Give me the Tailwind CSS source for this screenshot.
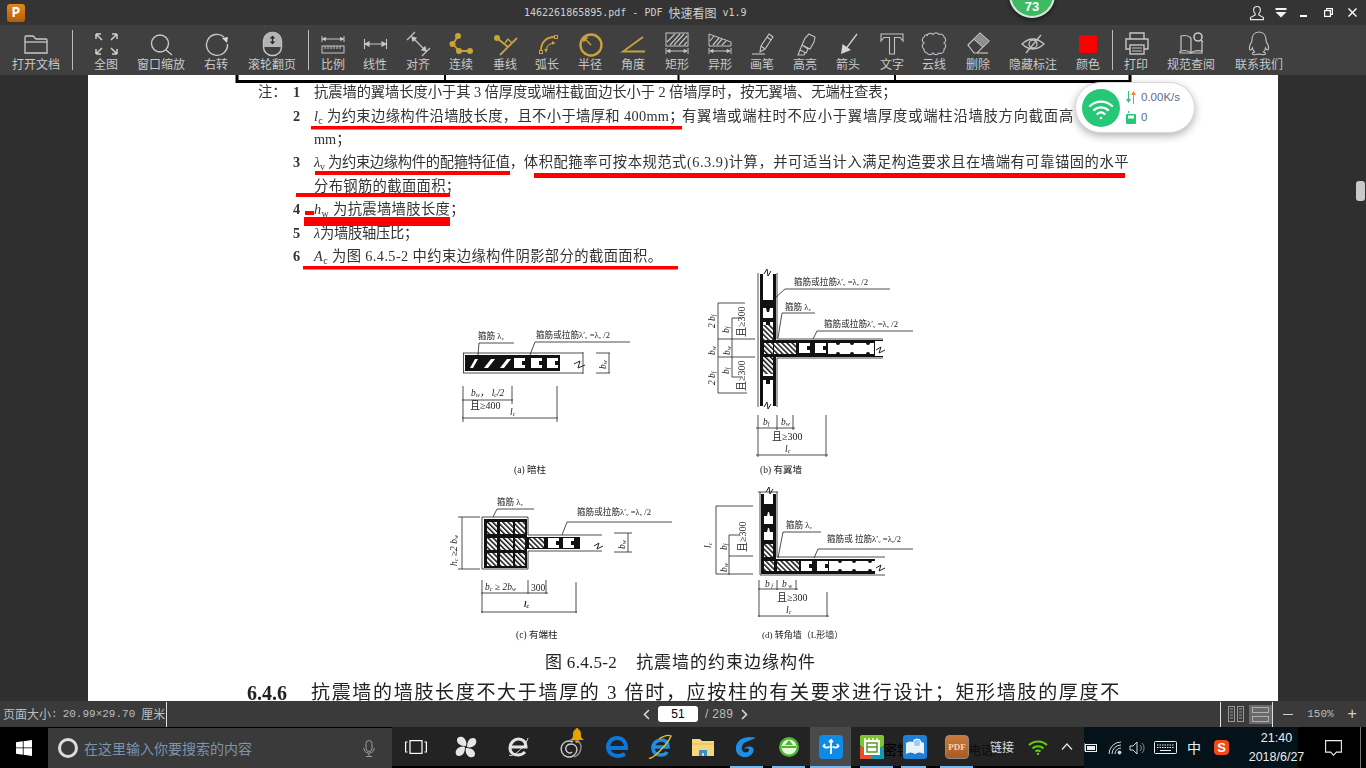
<!DOCTYPE html>
<html lang="zh">
<head>
<meta charset="UTF-8">
<title>PDF 快速看图</title>
<script src="https://cdn.jsdelivr.net/npm/@tailwindcss/browser@4"></script>
</head>
<body class="bg-black">
<div class="relative w-[1366px] h-[768px] overflow-hidden flex flex-col font-['Noto_Sans_CJK_SC','Liberation_Sans',sans-serif]">

  <!-- title bar -->
  <header class="h-[25px] shrink-0 bg-[#343434] flex items-center text-[#d0d0d0]">
    <div class="ml-[7px] w-[18px] h-[18px] rounded-[3px] bg-gradient-to-b from-[#e08a20] to-[#b85c08] flex items-center justify-center text-white text-[14px] leading-none font-bold font-['Liberation_Mono',monospace]">P</div>
    <div class="ml-[499px] flex items-center whitespace-nowrap font-['DejaVu_Sans_Mono',monospace] text-[10px] leading-none">1462261865895.pdf - PDF&nbsp;<span class="text-[12px] font-['Noto_Sans_CJK_SC',sans-serif]">快速看图</span>&nbsp;v1.9</div>
    <div class="ml-auto flex items-center">
      <svg class="w-[16px] h-[16px] mr-[10px]" viewBox="0 0 16 16" fill="none" stroke="#e8e8e8" stroke-width="1.1"><path d="M8 1.5c-2.4 0-3.4 1.8-3.4 3.6 0 1.6.7 2.9 1.6 3.6v1.2L1.5 12.6v2h13v-2l-4.700-2.700V8.700c.9-.7 1.600-2 1.600-3.600 0-1.800-1-3.600-3.400-3.600z"/></svg>
      <svg class="w-[12px] h-[10px] mr-[13px]" viewBox="0 0 12 10" fill="#f2f2f2"><rect width="11" height="2" x=".5"/><path d="M.5 4h11L6 9.500z"/></svg>
      <div class="w-[7px] h-[2px] bg-white mt-[7px] mr-[17px]"></div>
      <svg class="w-[9px] h-[9px] mr-[15px]" viewBox="0 0 9 9" fill="none" stroke="#fff" stroke-width="1.200"><rect x=".6" y="2.600" width="5.800" height="5.800"/><path d="M2.600 2.600V.6h5.800v5.800H6.400"/></svg>
      <svg class="w-[9px] h-[9px] mr-[9px]" viewBox="0 0 9 9" stroke="#fff" stroke-width="1.400"><path d="M.5.5l8 8M8.500.5l-8 8"/></svg>
    </div>
  </header>

  <!-- toolbar -->
  <nav class="h-[50px] shrink-0 bg-[#404040] flex text-[12px] leading-[14px] text-[#c8c8c8] whitespace-nowrap">
    <div class="w-[72px] flex flex-col items-center pt-[5px]">
      <svg class="w-[36px] h-[27px]" viewBox="0 0 36 27" fill="none" stroke="#c9c9c9" stroke-width="1.300"><path d="M7 23V7a1 1 0 0 1 1-1h7l3 3h10a1 1 0 0 1 1 1v13z"/><path d="M7 12h22"/></svg>
      <span>打开文档</span>
    </div>
    <div class="w-px h-[40px] mt-[5px] bg-[#bdbdbd]"></div>
    <div class="w-[66px] flex flex-col items-center pt-[5px]">
      <svg class="w-[36px] h-[27px]" viewBox="0 0 36 27" fill="none" stroke="#cfcfcf" stroke-width="1.500"><path d="M8 4l6 6M8 4h5M8 4v5M29 4l-6 6M29 4h-5M29 4v5M8 24l6-6M8 24h5M8 24v-5M29 24l-6-6M29 24h-5M29 24v-5"/></svg>
      <span>全图</span>
    </div>
    <div class="w-[44px] flex flex-col items-center pt-[5px]">
      <svg class="w-[36px] h-[27px]" viewBox="0 0 36 27" fill="none" stroke="#c9c9c9" stroke-width="1.400"><circle cx="17" cy="13.500" r="8.500"/><path d="M23 20l6 5"/></svg>
      <span>窗口缩放</span>
    </div>
    <div class="w-[66px] flex flex-col items-center pt-[5px]">
      <svg class="w-[36px] h-[27px]" viewBox="0 0 36 27" fill="none" stroke="#c9c9c9" stroke-width="1.400"><path d="M26 7A10.500 10.500 0 1 0 29.500 14"/><path d="M24 8l6-1-1 6z" fill="#d8d8d8" stroke="none"/></svg>
      <span>右转</span>
    </div>
    <div class="w-[46px] flex flex-col items-center pt-[5px]">
      <svg class="w-[36px] h-[27px]" viewBox="0 0 36 27" fill="none" stroke="#c9c9c9" stroke-width="1.400"><rect x="9.500" y="2.500" width="18" height="23" rx="8.500"/><path d="M9.500 11a8.500 8.500 0 0 1 18 0v6h-18z" fill="#b4b4b4" stroke="none"/><path d="M18.500 6.500v7M16.500 8.500l2-2 2 2M16.500 11.500l2 2 2-2" stroke="#222" stroke-width="1.200"/></svg>
      <span>滚轮翻页</span>
    </div>
    <div class="w-[13px]"></div>
    <div class="w-px h-[40px] mt-[5px] bg-[#bdbdbd]"></div>
    <div class="w-[48px] flex flex-col items-center pt-[5px]">
      <svg class="w-[36px] h-[27px]" viewBox="0 0 36 27" fill="none" stroke="#c6c6c6" stroke-width="1"><path d="M7 6v6M29 6v6M7.500 9h21"/><path d="M7.500 9l3-1.500v3zM28.500 9l-3-1.500v3z" fill="#c6c6c6"/><rect x="7" y="16" width="22" height="7"/><path d="M10 16v3M13 16v3M16 16v3M19 16v3M22 16v3M25 16v3"/></svg>
      <span>比例</span>
    </div>
    <div class="w-[36px] flex flex-col items-center pt-[5px]">
      <svg class="w-[36px] h-[27px]" viewBox="0 0 36 27" fill="none" stroke="#c6c6c6" stroke-width="1.100"><path d="M7.500 9v10M29.500 9v10M8 14h21"/><path d="M8 14l4-2v4zM29 14l-4-2v4z" fill="#c6c6c6"/></svg>
      <span>线性</span>
    </div>
    <div class="w-[50px] flex flex-col items-center pt-[5px]">
      <svg class="w-[36px] h-[27px]" viewBox="0 0 36 27" fill="none" stroke="#c6c6c6" stroke-width="1.200"><path d="M7 10l8-8M22 26l8-8M12 7l14 14"/><path d="M12 7l4 1-3 3zM26 21l-4-1 3-3z" fill="#c6c6c6"/></svg>
      <span>对齐</span>
    </div>
    <div class="w-[36px] flex flex-col items-center pt-[5px]">
      <svg class="w-[36px] h-[27px]" viewBox="0 0 36 27" fill="none" stroke="#c9a23a" stroke-width="1.800"><path d="M15 6l-5 8 6 7 11 0"/><g fill="#c9a23a" stroke="none"><circle cx="15" cy="6" r="3"/><circle cx="9.500" cy="14" r="3"/><circle cx="16" cy="21" r="3"/><circle cx="27" cy="21" r="3"/></g></svg>
      <span>连续</span>
    </div>
    <div class="w-[52px] flex flex-col items-center pt-[5px]">
      <svg class="w-[36px] h-[27px]" viewBox="0 0 36 27" fill="none" stroke="#c9a23a" stroke-width="1.800"><path d="M10 8l11 9M30 8L13 25"/><path d="M25 13l-4-4-3 4" stroke-width="1.300"/><circle cx="10" cy="8" r="3" fill="#c9a23a" stroke="none"/></svg>
      <span>垂线</span>
    </div>
    <div class="w-[32px] flex flex-col items-center pt-[5px]">
      <svg class="w-[36px] h-[27px]" viewBox="0 0 36 27" fill="none" stroke="#c9a23a" stroke-width="1.800"><path d="M12 20C12 12 18 7 25 7"/><path d="M17 22C17 16 21 13 26 13" stroke-width="1.200"/><path d="M26 13l-3-2v4zM17 22l-2-3h4z" fill="#c9a23a" stroke="none"/><rect x="10.500" y="20.500" width="3" height="3" stroke-width="1"/><rect x="25.500" y="5.500" width="3" height="3" stroke-width="1"/></svg>
      <span>弧长</span>
    </div>
    <div class="w-[54px] flex flex-col items-center pt-[5px]">
      <svg class="w-[36px] h-[27px]" viewBox="0 0 36 27" fill="none" stroke="#c9a23a" stroke-width="2.400"><circle cx="19" cy="15" r="10.500"/><path d="M19 15l-7-7" stroke-width="1.400"/><path d="M10.500 6.500l6 1-5 5z" fill="#c9a23a" stroke="none"/></svg>
      <span>半径</span>
    </div>
    <div class="w-[32px] flex flex-col items-center pt-[5px]">
      <svg class="w-[36px] h-[27px]" viewBox="0 0 36 27" fill="none" stroke="#c9a23a" stroke-width="1.800"><path d="M28 7L8 21.500h22"/></svg>
      <span>角度</span>
    </div>
    <div class="w-[56px] flex flex-col items-center pt-[5px]">
      <svg class="w-[36px] h-[27px]" viewBox="0 0 36 27" fill="none" stroke="#c4c4c4" stroke-width="1"><rect x="7" y="3" width="22" height="13"/><path d="M8 12l8-8M11 15l10-11M15 15l10-11M20 15l8-9M25 15l3-3" stroke-width="1.200"/><path d="M7 18v6M29 18v6M8 21h20"/><path d="M8 21l3-1.500v3zM28 21l-3-1.500v3z" fill="#c4c4c4"/></svg>
      <span>矩形</span>
    </div>
    <div class="w-[30px] flex flex-col items-center pt-[5px]">
      <svg class="w-[36px] h-[27px]" viewBox="0 0 36 27" fill="none" stroke="#c4c4c4" stroke-width="1"><path d="M7 4v12h22v-4z"/><path d="M8 11l4-5M11 15l6-7M15 15l5-6M20 15l4-4" stroke-width="1.200"/><path d="M7 18v6M29 18v6M8 21h20"/><path d="M8 21l3-1.500v3zM28 21l-3-1.500v3z" fill="#c4c4c4"/></svg>
      <span>异形</span>
    </div>
    <div class="w-[54px] flex flex-col items-center pt-[5px]">
      <svg class="w-[36px] h-[27px]" viewBox="0 0 36 27" fill="none" stroke="#c4c4c4" stroke-width="1.100"><path d="M16 22l1-6 8-12 4 3-8 12zM23 7l4 3M17 16l4 3"/><path d="M8 24h13"/></svg>
      <span>画笔</span>
    </div>
    <div class="w-[32px] flex flex-col items-center pt-[5px]">
      <svg class="w-[36px] h-[27px]" viewBox="0 0 36 27" fill="none" stroke="#c4c4c4" stroke-width="1.100"><path d="M22 4l6 3-1 5-4 7-8-4 3-7zM15 15l-2 5 6 3 2-4zM13 20l-2 5h6l1-2"/></svg>
      <span>高亮</span>
    </div>
    <div class="w-[54px] flex flex-col items-center pt-[5px]">
      <svg class="w-[36px] h-[27px]" viewBox="0 0 36 27" fill="none" stroke="#d4d4d4" stroke-width="1.300"><path d="M27 4L15 20"/><path d="M11 24l1.500-10 8.500 6z" fill="#d4d4d4" stroke="none"/></svg>
      <span>箭头</span>
    </div>
    <div class="w-[34px] flex flex-col items-center pt-[5px]">
      <svg class="w-[36px] h-[27px]" viewBox="0 0 36 27" fill="none" stroke="#c4c4c4" stroke-width="1.100"><path d="M7 4h22v7l-3-3.500h-5.500V24h-5V7.500H10L7 11z"/></svg>
      <span>文字</span>
    </div>
    <div class="w-[50px] flex flex-col items-center pt-[5px]">
      <svg class="w-[36px] h-[27px]" viewBox="0 0 36 27" fill="none" stroke="#b8b8b8" stroke-width="1.200"><path d="M11 6a3.500 3.500 0 0 1 6-1.500 3.500 3.500 0 0 1 6 0 3.500 3.500 0 0 1 5 2.500 3.500 3.500 0 0 1 0 6 3.500 3.500 0 0 1 0 6 3.500 3.500 0 0 1-5 4 3.500 3.500 0 0 1-6 0 3.500 3.500 0 0 1-6 0 3.500 3.500 0 0 1-3-4 3.500 3.500 0 0 1 0-6 3.500 3.500 0 0 1 0-6 3.500 3.500 0 0 1 3-2.500z"/></svg>
      <span>云线</span>
    </div>
    <div class="w-[38px] flex flex-col items-center pt-[5px]">
      <svg class="w-[36px] h-[27px]" viewBox="0 0 36 27" fill="none" stroke="#c4c4c4" stroke-width="1.200"><path d="M8 15L20 3l9 8-12 12h-3z"/><path d="M14 9l9 8"/><path d="M15 9l5-5 8 7-5 5z" fill="#8f8f8f" stroke="none"/><path d="M17 23h11"/></svg>
      <span>删除</span>
    </div>
    <div class="w-[72px] flex flex-col items-center pt-[5px]">
      <svg class="w-[36px] h-[27px]" viewBox="0 0 36 27" fill="none" stroke="#c4c4c4" stroke-width="1.300"><path d="M7 14Q18 4 29 14 18 24 7 14z"/><circle cx="18" cy="14" r="4"/><path d="M11 23L26 5"/></svg>
      <span>隐藏标注</span>
    </div>
    <div class="w-[38px] flex flex-col items-center pt-[5px]">
      <svg class="w-[36px] h-[27px]" viewBox="0 0 36 27"><rect x="9" y="5" width="18" height="18" rx="2" fill="#ff0000"/></svg>
      <span>颜色</span>
    </div>
    <div class="w-[5px]"></div>
    <div class="w-px h-[40px] mt-[5px] bg-[#bdbdbd]"></div>
    <div class="w-[46px] flex flex-col items-center pt-[5px]">
      <svg class="w-[36px] h-[27px]" viewBox="0 0 36 27" fill="none" stroke="#c6c6c6" stroke-width="1.400"><path d="M12 9V3h14v6M12 19H8V9h22v10h-4"/><rect x="12" y="15" width="14" height="9"/><path d="M14 18h10M14 21h10" stroke-width="1"/></svg>
      <span>打印</span>
    </div>
    <div class="w-[64px] flex flex-col items-center pt-[5px]">
      <svg class="w-[36px] h-[27px]" viewBox="0 0 36 27" fill="none" stroke="#c6c6c6" stroke-width="1.200"><path d="M18 8c-2-2-6-3-10-2v15c4-1 8 0 10 2 2-2 6-3 11-2V11M18 8v15"/><path d="M7 21v2h22v-2"/><circle cx="25" cy="7" r="4" stroke-width="1.600"/><path d="M28 10l2 2"/></svg>
      <span>规范查阅</span>
    </div>
    <div class="w-[72px] flex flex-col items-center pt-[5px]">
      <svg class="w-[36px] h-[27px]" viewBox="0 0 36 27" fill="none" stroke="#c6c6c6" stroke-width="1.100"><path d="M18 2c-5 0-7 4-7 8 0 2-1 3-2 5-1 3-.5 5 .5 5 .6 0 1.500-1 2-2 .2 1.500 1 3 2 4-1.500.5-2.500 1.200-2 2 .5 1 4 .7 6.500 0 2.500.7 6 1 6.500 0 .5-.8-.5-1.500-2-2 1-1 1.800-2.500 2-4 .5 1 1.400 2 2 2 1 0 1.500-2 .5-5-1-2-2-3-2-5 0-4-2-8-7-8z"/></svg>
      <span>联系我们</span>
    </div>
  </nav>

  <!-- document area -->
  <main class="relative h-[626px] shrink-0 flex bg-[#2f2f2f]">
    <div class="w-[88px] shrink-0"></div>
    <section class="relative w-[1190px] shrink-0 bg-white overflow-hidden">
      <div class="blur-[0.3px] pl-[170px] pt-[5px] text-[#333] text-[14.300px] whitespace-nowrap font-['Liberation_Serif','Noto_Sans_CJK_SC',serif]">
        <div class="h-[24px] leading-[24px] flex"><span class="w-[35px]">注：</span><b class="w-[21px]">1</b><span class="tracking-[-0.08px]">抗震墙的翼墙长度小于其 3 倍厚度或端柱截面边长小于 2 倍墙厚时，按无翼墙、无端柱查表；</span></div>
        <div class="h-[24px] leading-[24px] flex"><span class="w-[35px]"></span><b class="w-[21px]">2</b><span class="tracking-[0.35px]"><i>l</i><sub class="text-[10px]">c</sub> 为约束边缘构件沿墙肢长度，且不小于墙厚和 400mm；</span><span class="ml-[-2px] tracking-[0.78px]">有翼墙或端柱时不应小于翼墙厚度或端柱沿墙肢方向截面高</span></div>
        <div class="h-[23px] leading-[23px] flex"><span class="w-[56px]"></span><span>mm；</span></div>
        <div class="h-[23px] leading-[23px] flex"><span class="w-[35px]"></span><b class="w-[21px]">3</b><span class="tracking-[-0.3px]"><i>λ</i><sub class="text-[10px]">v</sub> 为约束边缘构件的配箍特征值，</span><span class="tracking-[0.53px]">体积配箍率可按本规范式(6.3.9)计算，并可适当计入满足构造要求且在墙端有可靠锚固的水平</span></div>
        <div class="h-[24px] leading-[24px] flex"><span class="w-[56px]"></span><span class="tracking-[0.35px]">分布钢筋的截面面积；</span></div>
        <div class="h-[23px] leading-[23px] flex"><span class="w-[35px]"></span><b class="w-[21px]">4</b><span class="tracking-[0.35px]"><i>h</i><sub class="text-[10px]">w</sub> 为抗震墙墙肢长度；</span></div>
        <div class="h-[24px] leading-[24px] flex"><span class="w-[35px]"></span><b class="w-[21px]">5</b><span class="tracking-[-0.3px]"><i>λ</i>为墙肢轴压比；</span></div>
        <div class="h-[23px] leading-[23px] flex"><span class="w-[35px]"></span><b class="w-[21px]">6</b><span class="tracking-[0.4px]"><i>A</i><sub class="text-[10px]">c</sub> 为图 6.4.5-2 中约束边缘构件阴影部分的截面面积。</span></div>

        <!-- caption and the cut-off clause: placed under the drawing block -->
        <div class="h-[383px]"></div>
        <div class="h-[24px] leading-[24px] pl-[287px] text-[17px] text-[#222] tracking-[0.3px]">图 6.4.5-2<span class="ml-[19px] tracking-[1px]">抗震墙的约束边缘构件</span></div>
        <div class="mt-[4px] h-[28px] leading-[28px] -ml-[11px] flex items-center text-[#222]"><b class="text-[20px] w-[64px]">6.4.6</b><span class="text-[19px] tracking-[1.680px]">抗震墙的墙肢长度不大于墙厚的 3 倍时，应按柱的有关要求进行设计；矩形墙肢的厚度不</span></div>
      </div>

      <!-- four detail drawings, screen coordinates -->
      <svg class="absolute left-0 top-0 blur-[0.3px]" width="1190" height="626" viewBox="88 75 1190 626" font-size="8.600" fill="#222" font-family="Liberation Serif, Noto Sans CJK SC, serif">
        <defs>
          <pattern id="h" width="3.600" height="3.600" patternUnits="userSpaceOnUse" patternTransform="rotate(-45)"><rect width="3.600" height="3.600" fill="#fff"/><rect width="1.500" height="3.600" fill="#111"/></pattern>
          <g id="cell"><rect width="11" height="10" fill="#fff"/><rect x="8" y="3" width="3.500" height="4" fill="#111"/></g>
        </defs>

        <!-- (a) -->
        <g fill="none" stroke="#222" stroke-width=".8">
          <path d="M478 355L479 343H514M530 355L535 342H630"/>
          <path d="M463 353H583M463 373H583M463.500 353V373M583 352V374"/>
          <path d="M463 386V422M512 386V404M557 386V422M462 400H513M462 418H558"/>
          <path d="M596 353H610M596 373H610M609 353V373"/>
        </g>
        <rect x="465" y="355" width="95" height="16" fill="#111"/>
        <path d="M470 368l5-9h3l-5 9zM484 368l7-9h4l-7 9zM500 368l7-9h4l-7 9z" fill="#fff"/>
        <use href="#cell" x="514" y="358"/><use href="#cell" x="531" y="358"/><use href="#cell" x="547" y="358"/>
        <rect x="560" y="356" width="22" height="14" fill="#fff"/>
        <path d="M574 364l6-3-2 7 7-3" fill="none" stroke="#222"/>
        <g><text x="478" y="339">箍筋 λ<tspan font-size="5" dy="1">v</tspan></text>
        <text x="536" y="338">箍筋或拉筋λ′<tspan font-size="5" dy="1">v</tspan><tspan dy="-1"> =λ</tspan><tspan font-size="5" dy="1">v</tspan><tspan dy="-1"> /2</tspan></text>
        <text x="471" y="396" font-size="9.500" font-style="italic">b<tspan font-size="6" dy="1">w</tspan><tspan dy="-1">， l</tspan><tspan font-size="6" dy="1">c</tspan><tspan dy="-1">/2</tspan></text>
        <text x="470" y="409" font-size="10">且≥400</text>
        <text x="510" y="415" font-size="9.500" font-style="italic">l<tspan font-size="6" dy="1">c</tspan></text>
        <text transform="translate(606 369) rotate(-90)" font-size="9.500" font-style="italic">b<tspan font-size="6" dy="1">w</tspan></text>
        <text x="514" y="473" font-size="9.500">(a) 暗柱</text></g>

        <!-- (b) -->
        <g fill="none" stroke="#222" stroke-width=".8">
          <path d="M758 273V407M777 273V339M777 358V407M777 339H883M777 358H883"/>
          <path d="M775 298L785 289H890M778 338L782 313H815M813 339L817 331H913"/>
          <path d="M718 303V393M732 318V377M718 303H745M718 339H755M718 357H755M718 393H747M732 318H741M732 377H741"/>
          <path d="M758 415V457M777 415V430M793 415V430M826 415V457M756 428H795M756 455H828"/>
          <path d="M764 274l3-5 1 7 3-5M764 407l3-5 1 7 3-5" stroke-width="1"/>
        </g>
        <rect x="760" y="274" width="3" height="132" fill="#111"/><rect x="773" y="274" width="3" height="132" fill="#111"/>
        <path d="M763 300h10v8h-3l-1 4h-2l-1-4h-3zM763 318h10v4h-3v4h-4v-4h-3zM763 376h10v4h-3v4h-4v-4h-3z" fill="#111"/>
        <rect x="763" y="325" width="10" height="16" fill="url(#h)"/><rect x="763" y="357" width="10" height="17" fill="url(#h)"/>
        <rect x="760" y="340" width="123" height="17" fill="#111"/>
        <rect x="764" y="343" width="9" height="11" fill="url(#h)"/><rect x="774" y="343" width="22" height="11" fill="url(#h)"/>
        <use href="#cell" x="799" y="343"/><use href="#cell" x="815" y="343"/>
        <rect x="828" y="343" width="46" height="11" fill="#fff"/>
        <circle cx="838" cy="343" r="2" fill="#111"/><circle cx="838" cy="354" r="2" fill="#111"/><circle cx="852" cy="343" r="2" fill="#111"/><circle cx="852" cy="354" r="2" fill="#111"/><circle cx="868" cy="343" r="2" fill="#111"/><circle cx="868" cy="354" r="2" fill="#111"/>
        <rect x="875" y="341" width="9" height="15" fill="#fff"/>
        <path d="M876 350l5-3-2 6 6-3" fill="none" stroke="#222"/>
        <g><text x="794" y="285">箍筋或拉筋λ′<tspan font-size="5" dy="1">v</tspan><tspan dy="-1"> =λ</tspan><tspan font-size="5" dy="1">v</tspan><tspan dy="-1"> /2</tspan></text>
        <text x="785" y="310">箍筋 λ<tspan font-size="5" dy="1">v</tspan></text>
        <text x="824" y="327">箍筋或拉筋λ′<tspan font-size="5" dy="1">v</tspan><tspan dy="-1"> =λ</tspan><tspan font-size="5" dy="1">v</tspan><tspan dy="-1"> /2</tspan></text>
        <text transform="translate(715 328) rotate(-90)" font-size="9.500" font-style="italic">2 b<tspan font-size="6" dy="1">f</tspan></text>
        <text transform="translate(729 333) rotate(-90)" font-size="9.500" font-style="italic">b<tspan font-size="6" dy="1">f</tspan></text>
        <text transform="translate(745 337) rotate(-90)" font-size="10">且≥300</text>
        <text transform="translate(715 355) rotate(-90)" font-size="9.500" font-style="italic">b<tspan font-size="6" dy="1">w</tspan></text>
        <text transform="translate(730 355) rotate(-90)" font-size="9.500" font-style="italic">b<tspan font-size="6" dy="1">w</tspan></text>
        <text transform="translate(715 385) rotate(-90)" font-size="9.500" font-style="italic">2 b<tspan font-size="6" dy="1">f</tspan></text>
        <text transform="translate(729 374) rotate(-90)" font-size="9.500" font-style="italic">b<tspan font-size="6" dy="1">f</tspan></text>
        <text transform="translate(745 391) rotate(-90)" font-size="10">且≥300</text>
        <text x="763" y="425" font-size="9.500" font-style="italic">b<tspan font-size="6" dy="1">f</tspan></text>
        <text x="781" y="425" font-size="9.500" font-style="italic">b<tspan font-size="6" dy="1">w</tspan></text>
        <text x="772" y="440" font-size="10">且≥300</text>
        <text x="785" y="452" font-size="9.500" font-style="italic">l<tspan font-size="6" dy="1">c</tspan></text>
        <text x="760" y="473" font-size="9.500">(b) 有翼墙</text></g>

        <!-- (c) -->
        <g fill="none" stroke="#222" stroke-width=".8">
          <path d="M493 517L497 509H534M562 535L567 522H672"/>
          <path d="M482 517H528V535H602M528 569V551H602M482 517V569H528"/>
          <path d="M458 517H480M458 569H480M462 517V569"/>
          <path d="M614 533H632M614 552H632M628 533V552"/>
          <path d="M482 580V613M528 580V594M546 580V594M576 582V613M481 593H548M481 612H577"/>
        </g>
        <rect x="484" y="519" width="43" height="49" fill="#111"/>
        <g fill="url(#h)"><rect x="487" y="522" width="10" height="12"/><rect x="500" y="522" width="13" height="12"/><rect x="515" y="522" width="10" height="12"/><rect x="487" y="538" width="10" height="12"/><rect x="500" y="538" width="13" height="12"/><rect x="515" y="538" width="10" height="12"/><rect x="487" y="553" width="10" height="13"/><rect x="500" y="553" width="13" height="13"/><rect x="515" y="553" width="10" height="13"/></g>
        <rect x="527" y="537" width="56" height="12" fill="#111"/>
        <rect x="529" y="538" width="15" height="10" fill="url(#h)"/>
        <use href="#cell" x="548" y="538"/><use href="#cell" x="563" y="538"/>
        <rect x="580" y="537" width="22" height="12" fill="#fff"/>
        <path d="M594 546l5-3-2 6 6-3" fill="none" stroke="#222"/>
        <g><text x="497" y="505">箍筋 λ<tspan font-size="5" dy="1">v</tspan></text>
        <text x="577" y="515">箍筋或拉筋λ′<tspan font-size="5" dy="1">v</tspan><tspan dy="-1"> =λ</tspan><tspan font-size="5" dy="1">v</tspan><tspan dy="-1"> /2</tspan></text>
        <text transform="translate(457 566) rotate(-90)" font-size="9.500" font-style="italic">h<tspan font-size="6" dy="1">c</tspan><tspan dy="-1"> ≥2 b</tspan><tspan font-size="6" dy="1">w</tspan></text>
        <text transform="translate(625 549) rotate(-90)" font-size="9.500" font-style="italic">b<tspan font-size="6" dy="1">w</tspan></text>
        <text x="485" y="590" font-size="9.500" font-style="italic">b<tspan font-size="6" dy="1">c</tspan><tspan dy="-1"> ≥ 2b</tspan><tspan font-size="6" dy="1">w</tspan></text>
        <text x="531" y="591" font-size="9.500">300</text>
        <text x="524" y="607" font-weight="bold" font-style="italic">l<tspan font-size="6" dy="1">c</tspan></text>
        <text x="516" y="638" font-size="9.500">(c) 有端柱</text></g>

        <!-- (d) -->
        <g fill="none" stroke="#222" stroke-width=".8">
          <path d="M758 492H778M760 492V575H885M777 492V557H885"/>
          <path d="M778 558L783 532H821M814 558L818 549H913"/>
          <path d="M716 506V574M729 535V575M716 506H753M716 574H753M729 535H739M729 556H753"/>
          <path d="M759 580V617M777 580V590M796 580V590M827 592V617M758 589H798M758 616H829"/>
          <path d="M766 492l3-5 1 7 3-5" stroke-width="1"/>
        </g>
        <rect x="761" y="494" width="15" height="80" fill="#111"/>
        <rect x="764" y="494" width="9" height="10" fill="#fff"/>
        <path d="M764 516h3l1-4h1l1 4h3v8h-9zM764 532h3l1-4h1l1 4h3v8h-9z" fill="#fff"/>
        <rect x="764" y="544" width="9" height="13" fill="url(#h)"/>
        <rect x="776" y="559" width="105" height="15" fill="#111"/>
        <rect x="764" y="561" width="10" height="10" fill="url(#h)"/><rect x="777" y="561" width="22" height="10" fill="url(#h)"/>
        <use href="#cell" x="801" y="561"/><use href="#cell" x="817" y="561"/>
        <rect x="829" y="561" width="46" height="10" fill="#fff"/>
        <circle cx="840" cy="561" r="2" fill="#111"/><circle cx="840" cy="571" r="2" fill="#111"/><circle cx="854" cy="561" r="2" fill="#111"/><circle cx="854" cy="571" r="2" fill="#111"/><circle cx="870" cy="561" r="2" fill="#111"/><circle cx="870" cy="571" r="2" fill="#111"/>
        <rect x="875" y="558" width="9" height="16" fill="#fff"/>
        <path d="M876 568l5-3-2 6 6-3" fill="none" stroke="#222"/>
        <g><text x="786" y="528">箍筋 λ<tspan font-size="5" dy="1">v</tspan></text>
        <text x="827" y="542">箍筋或 拉筋λ′<tspan font-size="5" dy="1">v</tspan><tspan dy="-1"> =λ</tspan><tspan font-size="5" dy="1">v</tspan><tspan dy="-1">/2</tspan></text>
        <text transform="translate(711 548) rotate(-90)" font-size="9.500" font-style="italic">l<tspan font-size="6" dy="1">c</tspan></text>
        <text transform="translate(727 550) rotate(-90)" font-size="9.500" font-style="italic">b<tspan font-size="6" dy="1">f</tspan></text>
        <text transform="translate(727 572) rotate(-90)" font-size="9.500" font-style="italic">b<tspan font-size="6" dy="1">w</tspan></text>
        <text transform="translate(746 552) rotate(-90)" font-size="10">且≥300</text>
        <text x="765" y="587" font-size="9.500" font-style="italic">b<tspan font-size="6" dy="1"> f</tspan></text>
        <text x="782" y="587" font-size="9.500" font-style="italic">b<tspan font-size="6" dy="1"> w</tspan></text>
        <text x="777" y="601" font-size="10">且≥300</text>
        <text x="786" y="613" font-size="9.500" font-style="italic">l<tspan font-size="6" dy="1">c</tspan></text>
        <text x="762" y="638" font-size="9">(d) 转角墙（L形墙）</text></g>
      </svg>

      <!-- user's markup on top of the page -->
      <svg class="absolute left-0 top-0" width="1190" height="626" viewBox="88 75 1190 626">
        <path d="M237 75v6.500h893V75" fill="none" stroke="#000" stroke-width="3"/>
        <path d="M445 75v5M678.500 75v5M895 75v5" stroke="#000" stroke-width="2"/>
        <g fill="#ff0000">
          <rect x="311" y="126" width="371" height="3.500"/>
          <rect x="315" y="171" width="195" height="4"/>
          <rect x="534" y="173" width="591" height="5"/>
          <rect x="296" y="193" width="154" height="4"/>
          <rect x="305" y="211" width="9" height="4"/>
          <rect x="304" y="217" width="146" height="9"/>
          <rect x="303" y="266" width="375" height="3.500"/>
        </g>
      </svg>
    </section>
    <aside class="w-[88px] shrink-0 flex justify-end pt-[106px]">
      <div class="w-[9px] h-[20px] mr-px rounded-[3px] bg-[#c9c9c9]"></div>
    </aside>

    <!-- network floater -->
    <div class="absolute left-[1075px] top-[7px] w-[120px] h-[51px] rounded-full bg-white border border-[#d8d8d8] shadow-[0_3px_8px_rgba(0,0,0,0.3)] flex items-center pl-[6px] font-['Liberation_Sans',sans-serif]">
      <div class="w-[38px] h-[38px] rounded-full bg-[#26c877] flex items-center justify-center">
        <svg class="w-[26px] h-[26px]" viewBox="0 0 26 26" fill="none" stroke="#fff" stroke-width="2.400" stroke-linecap="round"><path d="M2 11a16 16 0 0 1 22 0M6 15a10.500 10.500 0 0 1 14 0M9.500 19a5 5 0 0 1 7 0"/><circle cx="13" cy="23" r="1.300" fill="#fff" stroke="none"/></svg>
      </div>
      <div class="ml-[6px] flex flex-col gap-[5px] text-[11.500px] leading-[15px] text-[#5d6d85]">
        <div class="flex items-center gap-[5px]"><svg class="w-[10px] h-[13px]" viewBox="0 0 10 13"><path d="M3 0v8h2L2.500 12 0 8h2V0z" fill="#26c877"/><path d="M7 13V4H5l2.500-4L10 4H8v9z" fill="#f58220"/></svg><span>0.00K/s</span></div>
        <div class="flex items-center gap-[5px]"><svg class="w-[10px] h-[13px]" viewBox="0 0 10 13" fill="#26c877"><path d="M2 0h1v2h-1zM1 3h8a1 1 0 0 1 1 1v8a1 1 0 0 1-1 1H1a1 1 0 0 1-1-1V4a1 1 0 0 1 1-1z"/><rect x="2" y="4.500" width="6" height="3" fill="#fff"/></svg><span>0</span></div>
      </div>
    </div>
  </main>

  <!-- status bar -->
  <footer class="h-[26px] shrink-0 bg-[#3a3a3a] flex items-center text-[#bdbdbd] whitespace-nowrap">
    <div class="w-[167px] h-[25px] pl-[3px] border-r border-[#e0e0e0] flex items-center text-[11px] font-['Liberation_Mono',monospace]"><span class="text-[12px] font-['Noto_Sans_CJK_SC',sans-serif]">页面大小</span>:<span class="ml-[5px]">20.99×29.70</span><span class="ml-[6px] text-[12px] font-['Noto_Sans_CJK_SC',sans-serif]">厘米</span></div>
    <svg class="ml-[476px] w-[7px] h-[11px]" viewBox="0 0 7 11" fill="none" stroke="#ddd" stroke-width="1.500"><path d="M6 1L1.500 5.500 6 10"/></svg>
    <div class="ml-[8px] w-[40px] h-[16px] rounded-[3px] bg-white text-black text-[12px] leading-[16px] text-center font-['Liberation_Sans',sans-serif]">51</div>
    <span class="ml-[7px] text-[12px] tracking-[0.3px] font-['Liberation_Sans',sans-serif]">/ 289</span>
    <svg class="ml-[8px] w-[7px] h-[11px]" viewBox="0 0 7 11" fill="none" stroke="#ddd" stroke-width="1.500"><path d="M1 1l4.500 4.500L1 10"/></svg>
    <div class="ml-[472px] h-[25px] w-[53px] border-x border-[#e0e0e0] flex items-center justify-between pl-[7px]">
      <svg class="w-[17px] h-[16px]" viewBox="0 0 17 16" fill="none" stroke="#9a9a9a"><rect x=".5" y=".5" width="6" height="15"/><rect x="9.500" y=".5" width="6" height="15"/><path d="M2 3h3M2 6h3M2 9h3M2 12h3M11 3h3M11 6h3M11 9h3M11 12h3"/></svg>
      <div class="w-[23px] h-[19px] bg-[#6a6a6a] flex flex-col items-center justify-center gap-[3px]"><div class="w-[17px] h-[6px] border border-[#b0b0b0]"></div><div class="w-[17px] h-[6px] border border-[#b0b0b0]"></div></div>
    </div>
    <div class="ml-[10px] w-[10px] h-px bg-[#ccc]"></div>
    <span class="ml-[14px] text-[11px] font-['Liberation_Mono',monospace]">150%</span>
    <span class="ml-[14px] text-[16px] leading-none text-[#d0d0d0] font-['Liberation_Sans',sans-serif]">+</span>
  </footer>

  <!-- windows taskbar -->
  <div class="h-[41px] shrink-0 flex text-white">
    <div class="w-[48px] shrink-0 bg-black flex items-center justify-center">
      <svg class="w-[16px] h-[16px]" viewBox="0 0 16 16" fill="#fff"><path d="M0 2.300L6.800 1.300v6.200H0zM7.600 1.200L16 0v7.500H7.600zM0 8.300h6.800v6.400L0 13.700zM7.600 8.300H16V16l-8.400-1.200z"/></svg>
    </div>
    <div class="w-[344px] shrink-0 mt-px bg-[#3a3a3a] flex items-center text-[14px] text-[#7d93ab] whitespace-nowrap">
      <div class="ml-[10px] w-[20px] h-[20px] shrink-0 rounded-full border-[3px] border-[#dcdcdc]"></div>
      <span class="ml-[6px]">在这里输入你要搜索的内容</span>
      <svg class="ml-[111px] w-[12px] h-[17px]" viewBox="0 0 12 17" fill="none" stroke="#9a9a9a"><rect x="3" y=".5" width="6" height="11" rx="3"/><path d="M.8 8a5.200 5.200 0 0 0 10.400 0M6 13.500v3M3 16.500h6"/></svg>
    </div>
    <div class="relative w-[692px] shrink-0 flex bg-[#232323] border-b-2 border-black">
      <span class="absolute left-[491px] top-[15px] text-[14px] leading-none text-black">密钥</span>
      <span class="absolute left-[577px] top-[17px] text-[12px] leading-none text-[#0c0c0c]">电话:</span>
      <div class="w-[48px] flex items-center justify-center"><svg class="w-[22px] h-[14px]" viewBox="0 0 22 14" fill="none" stroke="#fff" stroke-width="1.200"><rect x="5" y=".6" width="12" height="12.800"/><path d="M2.500 2H.6v10h1.900M19.500 2h1.900v10h-1.900"/></svg></div>
      <div class="w-[52px] flex items-center justify-center"><svg class="w-[24px] h-[24px]" viewBox="0 0 24 24" fill="#e6e6e6"><path d="M12 11C7 11 3 9 3 5s5-4 7-2 3 5 2 8zM13 12c0-5 2-9 6-9s4 5 2 7-5 3-8 2zM12 13c5 0 9 2 9 6s-5 4-7 2-3-5-2-8zM11 12c0 5-2 9-6 9s-4-5-2-7 5-3 8-2z"/></svg></div>
      <div class="w-[52px] flex items-center justify-center"><svg class="w-[24px] h-[24px]" viewBox="0 0 24 24" fill="none" stroke="#e4e4e4" stroke-width="3"><path d="M5 12h15c0-5-3-8-7.500-8C8 4 4 8 4 13s4 7 8 7c3 0 5-1 7-3"/><path d="M3 20C7 23 20 11 22 3" stroke-width="1"/></svg></div>
      <div class="relative w-[52px] flex items-center justify-center"><svg class="w-[26px] h-[26px]" viewBox="0 0 26 26" fill="none" stroke="#d0d0d0" stroke-width="1.400"><path d="M16 8a8 8 0 1 0 4 8c0-4-3-6-6-6-4 0-6 3-5 6s4 4 6 2"/><path d="M14 6c5-2 10 2 10 7s-3 9-7 10" stroke="#909090"/></svg><svg class="absolute left-[26px] top-[1px] w-[14px] h-[15px]" viewBox="0 0 14 15" fill="#e8a100"><path d="M7 0c1 0 1.500 1 1.500 1.500C11 2.500 11 5 11 8c0 2 2 3 3 4H0c1-1 3-2 3-4 0-3 0-5.500 2.500-6.500C5.500 1 6 0 7 0zM5 13h4a2 2 0 0 1-4 0z"/></svg></div>
      <div class="w-[42px] flex items-center justify-center"><svg class="w-[22px] h-[22px]" viewBox="0 0 22 22" fill="none" stroke="#0a78d7" stroke-width="4"><path d="M3 12h17C20 5 16 2 11 2 6 2 2 6 2 11c0 5 4 9 10 9 3 0 5-1 7-2"/></svg></div>
      <div class="w-[44px] flex items-center justify-center"><svg class="w-[26px] h-[26px]" viewBox="0 0 26 26" fill="none"><path d="M7 13h14c0-5-3-7-7-7s-8 3-8 8 4 7 8 7c3 0 5-1 6-3" stroke="#1e8fe0" stroke-width="3.600"/><path d="M2 24C5 26 21 10 24 2c-4-2-9 1-12 3" stroke="#e8c020" stroke-width="1.400"/></svg></div>
      <div class="w-[42px] flex items-center justify-center"><svg class="w-[22px] h-[18px]" viewBox="0 0 22 18"><path d="M0 1h8l2 2h12v15H0z" fill="#f6d77a"/><path d="M0 6h22" stroke="#e5ba52"/><path d="M7 18v-6h8v6h-3v-3h-2v3z" fill="#2f8fd8"/></svg></div>
      <div class="relative w-[44px] flex items-center justify-center"><svg class="w-[24px] h-[24px]" viewBox="0 0 24 24" fill="none"><path d="M22 3C14 0 3 3 2 12c-1 7 5 11 11 10 5-1 8-6 6-9-2-2-7-2-9 1 2-1 5-1 5 1s-3 3-5 2c-3-1-3-6 0-9 3-2 8-3 12-5z" fill="#1d8fe4"/></svg><span class="absolute bottom-0 left-[6px] w-[33px] h-[2px] -mb-[2px] bg-[#7ab8f0]"></span></div>
      <div class="relative w-[42px] flex items-center justify-center"><svg class="w-[22px] h-[22px]" viewBox="0 0 22 22"><circle cx="11" cy="11" r="10" fill="#4eb62e"/><circle cx="11" cy="11" r="7.500" fill="#e6f5dc"/><path d="M4 11h14" stroke="#4eb62e" stroke-width="2"/><path d="M11 4l-4 5h8z" fill="#4eb62e"/></svg><span class="absolute bottom-0 left-[4px] w-[33px] h-[2px] -mb-[2px] bg-[#7ab8f0]"></span></div>
      <div class="relative w-[41px] bg-[#4a4a4a] flex items-center justify-center"><div class="w-[24px] h-[24px] rounded-[4px] bg-[#0f8be6] flex items-center justify-center"><svg class="w-[18px] h-[18px]" viewBox="0 0 18 18" fill="none" stroke="#fff" stroke-width="1.800"><path d="M9 2v14M1.500 8c2 2 4 2 6 .5M16.500 8c-2 2-4 2-6 .5M7 4l2-2 2 2M3 6L1.500 8l2 1.500M15 6l1.500 2-2 1.500"/></svg></div><span class="absolute bottom-0 left-0 w-full h-[2px] -mb-[2px] bg-[#7ab8f0]"></span></div>
      <div class="relative w-[42px] flex items-center justify-center"><svg class="w-[24px] h-[24px]" viewBox="0 0 24 24"><rect width="24" height="12" rx="2" fill="#7ec52d"/><rect y="12" width="12" height="12" fill="#e8502a"/><rect x="12" y="12" width="12" height="12" fill="#149ab0"/><path d="M5 3v2M9 3v2M13 3v2M17 3v2" stroke="#fff" stroke-width="1.500"/><rect x="4" y="5" width="16" height="15" fill="#fff"/><path d="M7 8h10v9H7zM7 12h10" fill="none" stroke="#5a9a20" stroke-width="1.500"/></svg><span class="absolute bottom-0 left-[9px] w-[33px] h-[2px] -mb-[2px] bg-[#7ab8f0]"></span></div>
      <div class="relative w-[44px] flex items-center justify-center"><svg class="w-[24px] h-[24px]" viewBox="0 0 24 24"><rect width="24" height="24" rx="3" fill="#1f7fd6"/><path d="M3 8c3-2 6-2 9 0 3-2 6-2 9 0v11c-3-2-6-2-9 0-3-2-6-2-9 0z" fill="#e9f2fa"/><circle cx="14" cy="8" r="4" fill="#9bd0f4" stroke="#fff"/></svg><span class="absolute bottom-0 left-[8px] w-[25px] h-[2px] -mb-[2px] bg-[#7ab8f0]"></span></div>
      <div class="relative w-[40px] flex items-center justify-center"><div class="w-[24px] h-[24px] rounded-[4px] bg-gradient-to-b from-[#c97a3c] to-[#a85a20] border border-[#8a8a8a] text-[9px] leading-[22px] text-center font-bold text-[#f2d8bc] font-['Liberation_Serif',serif]">PDF</div><span class="absolute bottom-0 left-[3px] w-[33px] h-[2px] -mb-[2px] bg-[#7ab8f0]"></span></div>
      <div class="w-[50px] flex items-center justify-center text-[12px] text-[#e0e0e0]">链接</div>
      <div class="w-[22px] flex items-center justify-center"><svg class="w-[20px] h-[16px]" viewBox="0 0 20 16" fill="none" stroke="#5fcf10" stroke-width="2"><path d="M1 6a13 13 0 0 1 18 0M4.500 9.500a8 8 0 0 1 11 0M7.500 12.500a3.500 3.500 0 0 1 5 0"/><circle cx="10" cy="15" r="1.200" fill="#5fcf10" stroke="none"/></svg></div>
      <div class="w-[35px] flex items-center justify-center"><svg class="w-[12px] h-[7px]" viewBox="0 0 12 7" fill="none" stroke="#e8e8e8" stroke-width="1.200"><path d="M1 6.500l5-5.500 5 5.500"/></svg></div>
    </div>
    <div class="w-[163px] shrink-0 bg-[#04121a] flex items-center">
      <svg class="-ml-[3px] w-[16px] h-[12px]" viewBox="0 0 16 12" fill="none" stroke="#eee"><rect x="4.500" y="2.500" width="11" height="7"/><rect x="6" y="4" width="8" height="4" fill="#eee" stroke="none"/><path d="M0 3h3M0 6h3M3 1v8"/></svg>
      <svg class="ml-[11px] w-[14px] h-[14px]" viewBox="0 0 14 14" fill="none" stroke="#d8d8d8"><path d="M1 13A12 12 0 0 1 13 1M4 13a9 9 0 0 1 9-9M7 13a6 6 0 0 1 6-6"/><circle cx="11.500" cy="11.500" r="1.500" fill="#d8d8d8"/></svg>
      <svg class="ml-[7px] w-[17px] h-[14px]" viewBox="0 0 17 14" fill="none" stroke="#d8d8d8"><path d="M1 5h3l4-4v12l-4-4H1z"/><path d="M11 4a4 4 0 0 1 0 6M13 2a7 7 0 0 1 0 10" stroke="#8a8a8a"/></svg>
      <svg class="ml-[8px] w-[23px] h-[13px]" viewBox="0 0 23 13" fill="none" stroke="#eee"><rect x=".5" y=".5" width="22" height="12" rx="1"/><path d="M3 4h17M3 6.500h17" stroke-dasharray="1.500 1"/><path d="M6 9.500h11"/></svg>
      <span class="ml-[10px] text-[14px] text-[#eee]">中</span>
      <div class="ml-[13px] w-[15px] h-[15px] rounded-[4px] bg-[#f04a18] text-white text-[13px] leading-[15px] font-bold text-center font-['Liberation_Sans',sans-serif]">S</div>
    </div>
    <div class="w-[59px] shrink-0 bg-[linear-gradient(to_right,#04121a_86%,#000_86%)] flex flex-col items-center justify-center text-[12.500px] leading-[19px] text-[#eee] font-['Liberation_Sans',sans-serif] whitespace-nowrap">
      <span>21:40</span>
      <span>2018/6/27</span>
    </div>
    <div class="w-[55px] shrink-0 bg-black border-r border-[#777] flex items-center justify-center">
      <svg class="w-[17px] h-[16px]" viewBox="0 0 17 16" fill="none" stroke="#eee" stroke-width="1.100"><path d="M.6.6h15.800v11.500h-5l-2.900 3-2.900-3h-5z"/></svg>
    </div>
    <div class="w-[5px] shrink-0 bg-black"></div>
  </div>

  <!-- green badge poking in from the top edge -->
  <div class="absolute left-[1009px] -top-[28px] w-[46px] h-[46px] rounded-full bg-[#3cba62] border-2 border-[#d8e8dc] shadow-[0_2px_5px_rgba(0,0,0,0.5)] flex items-end justify-center pb-[2px] text-white text-[13px] leading-[14px] font-bold font-['Liberation_Sans',sans-serif]">73</div>
</div>
</body>
</html>
